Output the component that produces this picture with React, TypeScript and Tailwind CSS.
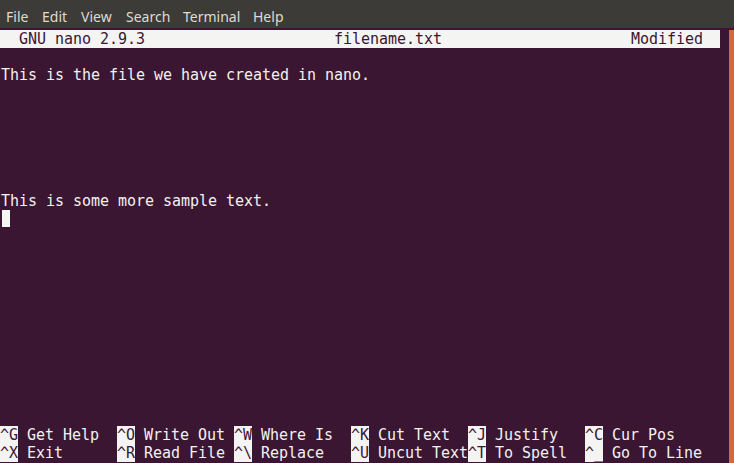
const BG = "#3b1632";

const menus = [
  { label: "File", w: "w-[36px]" },
  { label: "Edit", w: "w-[39px]" },
  { label: "View", w: "w-[45px]" },
  { label: "Search", w: "w-[57px]" },
  { label: "Terminal", w: "w-[70px]" },
  { label: "Help", w: "w-[40px]" },
];

const shortcuts = [
  [
    ["^G", "Get Help"],
    ["^O", "Write Out"],
    ["^W", "Where Is"],
    ["^K", "Cut Text"],
    ["^J", "Justify"],
    ["^C", "Cur Pos"],
  ],
  [
    ["^X", "Exit"],
    ["^R", "Read File"],
    ["^\\", "Replace"],
    ["^U", "Uncut Text"],
    ["^T", "To Spell"],
    ["^_", "Go To Line"],
  ],
];

const Row = ({ children, className = "" }: { children?: any; className?: string }) => (
  <div className={`h-[18px] leading-[18px] whitespace-pre ${className}`}>{children}</div>
);

const App = () => {
  const title =
    "  GNU nano 2.9.3".padEnd(37, " ") +
    "filename.txt".padEnd(33, " ") +
    "Modified  ";

  return (
    <div
      className="w-[734px] h-[463px] flex flex-col overflow-hidden"
      style={{ background: BG }}
    >
      <div className="h-[28px] bg-[#3c3b37] flex items-center pl-[6px] pt-[4px] text-[14px] text-[#dfdbd2] font-['Noto_Sans',sans-serif]">
        {menus.map((m) => (
          <span key={m.label} className={m.w}>
            {m.label}
          </span>
        ))}
      </div>

      <div className="flex flex-1 pt-[2px]">
        <div className="w-[720px] text-[15px] tracking-[-0.03px] text-[#f2f2f0] font-['DejaVu_Sans_Mono',monospace]">
          <Row className="bg-[#f4f4f2] text-[#3b1632] pl-[1px]">{title}</Row>
          <Row />
          <Row className="pl-[1px]">This is the file we have created in nano.</Row>
          <Row />
          <Row />
          <Row />
          <Row />
          <Row />
          <Row />
          <Row className="pl-[1px]">This is some more sample text.</Row>
          <Row>
            <span className="inline-block w-[8px] h-[17px] ml-[2px] bg-[#f4f4f2] align-top" />
          </Row>
          <Row />
          <Row />
          <Row />
          <Row />
          <Row />
          <Row />
          <Row />
          <Row />
          <Row />
          <Row />
          <Row />
          {shortcuts.map((line, i) => (
            <Row key={i} className="flex">
              {line.map(([k, label]) => (
                <span key={k} className="w-[117px] whitespace-pre">
                  <span className="bg-[#f4f4f2] text-[#3b1632]">{k}</span>
                  {" " + label}
                </span>
              ))}
            </Row>
          ))}
        </div>
        <div className="ml-[9px] w-[5px] bg-[#d4673e]" />
      </div>
    </div>
  );
};

export default App;
